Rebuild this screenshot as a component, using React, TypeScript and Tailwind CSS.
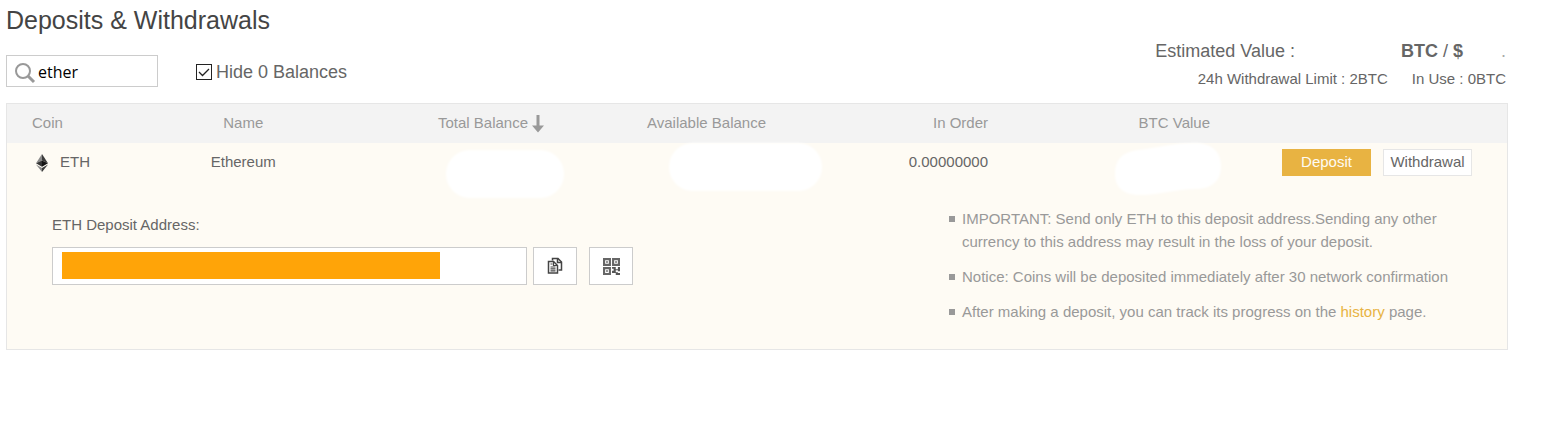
import { useState } from 'react';

const NOTES = [
  <>IMPORTANT: Send only ETH to this deposit address.Sending any other currency to this address may result in the loss of your deposit.</>,
  <>Notice: Coins will be deposited immediately after 30 network confirmation</>,
  <>After making a deposit, you can track its progress on the <a href="#history" className="text-[#e8b342]">history</a> page.</>,
];

function SearchIcon() {
  return (
    <svg width="22" height="22" viewBox="0 0 22 22" fill="none" stroke="#999" className="shrink-0" aria-hidden="true">
      <circle cx="8" cy="9" r="7" strokeWidth="2" />
      <path d="M13 14l6 6" strokeWidth="3" />
    </svg>
  );
}

function EthIcon() {
  return (
    <svg width="12" height="18" viewBox="0 0 12 18" aria-hidden="true">
      <path d="M6 0L0 9.2l6-2.6z" fill="#8a8a8a" />
      <path d="M6 0v6.600l6 2.600z" fill="#3c3c3b" />
      <path d="M0 9.200l6 3.500V6.600z" fill="#343434" />
      <path d="M12 9.200l-6 3.500V6.600z" fill="#141414" />
      <path d="M0 10.400L6 18v-4z" fill="#8a8a8a" />
      <path d="M12 10.400L6 18v-4z" fill="#3c3c3b" />
    </svg>
  );
}

function SortIcon() {
  return (
    <svg width="12" height="18" viewBox="0 0 12 18" fill="#999" aria-hidden="true">
      <path d="M4.500 0h3v10.500H12L6 17.500 0 10.500h4.500z" />
    </svg>
  );
}

function CopyIcon() {
  return (
    <svg width="16" height="18" viewBox="0 0 16 18" fill="none" stroke="#444" strokeWidth="1.500" aria-hidden="true">
      <path d="M5.500 3.500V1.500h5.500l3.500 3.500v8h-3" />
      <path d="M10.500 1.500v4h4" />
      <path d="M1.500 4.500h5l4 4v7.500h-9z" fill="#fff" />
      <path d="M6.500 4.500v4h4M3.500 7h2M3.500 10h5M3.500 11.900h5M3.500 13.800h5" strokeWidth="1.200" />
    </svg>
  );
}

function QrIcon() {
  return (
    <svg width="17" height="17" viewBox="0 0 16 16" aria-hidden="true">
      <g fill="none" stroke="#666" strokeWidth="2">
        <path d="M1 1h5.500v5.500H1zM9.500 1H15v5.500H9.500zM1 9.500h5.500V15H1z" />
      </g>
      <path d="M3 3h1.500v1.500H3zM11.500 3H13v1.500h-1.500zM3 11.500h1.500V13H3zM8.500 8.500h3.500v2h2v-2h2v4h-2v-1h-2v2h2v2.500H12v-2H8.500v-2H10v-2H8.500zM14 14h2v2h-2z" fill="#555" />
    </svg>
  );
}

export default function App() {
  const [search, setSearch] = useState('ether');
  const [hideZero, setHideZero] = useState(true);

  return (
    <div className="pl-[6px] pr-[37px] pt-1 font-['Liberation_Sans',sans-serif] text-[#666]">
      <h1 className="text-[25px] leading-8 text-[#444]">Deposits &amp; Withdrawals</h1>

      <div className="flex justify-between items-start">
        <div className="flex items-center pt-[19px]">
          <div className="flex items-center w-[152px] h-8 pl-2 pt-1 border border-[#ccc]">
            <SearchIcon />
            <input
              type="text"
              aria-label="Search coin"
              value={search}
              onChange={e => setSearch(e.target.value)}
              className="w-full min-w-0 pl-px pb-[2px] text-base text-black font-['Open_Sans',sans-serif] outline-none"
            />
          </div>
          <label className="flex items-center ml-[38px] pt-[2px] text-[18px]">
            <span className="relative flex w-4 h-4 mr-1">
              <input
                type="checkbox"
                checked={hideZero}
                onChange={e => setHideZero(e.target.checked)}
                className="appearance-none w-4 h-4 border border-[#222] bg-white"
              />
              {hideZero && (
                <svg viewBox="0 0 16 16" fill="none" stroke="#222" strokeWidth="1.300" className="absolute inset-0 pointer-events-none" aria-hidden="true">
                  <path d="M3 8l3.500 3.500L13 5" />
                </svg>
              )}
            </span>
            Hide 0 Balances
          </label>
        </div>

        <div className="pt-px pr-[2px]">
          <div className="flex justify-end text-[18px] leading-7">
            <span>Estimated Value :</span>
            <span className="ml-[106px]"><b>BTC</b> / <b>$</b></span>
            <span className="ml-[38px] text-[#aaa]">.</span>
          </div>
          <div className="flex justify-end gap-6 text-[15px] leading-7">
            <span>24h Withdrawal Limit : 2BTC</span>
            <span>In Use : 0BTC</span>
          </div>
        </div>
      </div>

      <div className="mt-[10px] border border-[#e6e6e6] bg-[#fefbf4] text-[15px]">
        <table className="w-full table-fixed">
          <colgroup>
            <col className="w-[10.5%]" />
            <col className="w-[10.5%]" />
            <col className="w-[14.8%]" />
            <col className="w-[14.8%]" />
            <col className="w-[14.8%]" />
            <col className="w-[14.8%]" />
            <col />
          </colgroup>
          <thead className="bg-[#f3f3f3] text-[#999]">
            <tr className="h-[39px]">
              <th className="pl-[25px] text-left font-normal">Coin</th>
              <th className="text-center font-normal">Name</th>
              <th className="font-normal">
                <button className="flex items-center gap-1 ml-auto">Total Balance <SortIcon /></button>
              </th>
              <th className="text-right font-normal">Available Balance</th>
              <th className="text-right font-normal">In Order</th>
              <th className="text-right font-normal">BTC Value</th>
              <th aria-label="Actions"></th>
            </tr>
          </thead>
          <tbody>
            <tr className="h-[39px]">
              <td className="pl-[29px]"><span className="flex items-center gap-3"><EthIcon />ETH</span></td>
              <td className="text-center">Ethereum</td>
              <td className="relative">
                <span className="absolute -right-5 top-[7px] w-[118px] h-12 rounded-[24px] bg-white blur-[1px]"></span>
              </td>
              <td className="relative">
                <span className="absolute -right-14 top-0 w-[153px] h-12 rounded-[24px] bg-white blur-[1px]"></span>
              </td>
              <td className="text-right">0.00000000</td>
              <td className="relative">
                <svg width="108" height="54" viewBox="0 0 108 54" className="absolute -right-3 -top-px blur-[1px]" aria-hidden="true">
                  <path d="M24 8C44 6 58 1 80 1c17 0 27 8 27 23 0 16-10 23-27 23-18 0-34 6-54 6C8 53 1 44 1 32 1 18 8 10 24 8z" fill="#fff" />
                </svg>
              </td>
              <td className="pr-[35px]">
                <div className="flex justify-end gap-3">
                  <button className="w-[89px] h-[27px] bg-[#e8b342] text-[#fefbf4]">Deposit</button>
                  <button className="w-[89px] h-[27px] bg-white border border-[#e6e6e6]">Withdrawal</button>
                </div>
              </td>
            </tr>
          </tbody>
        </table>

        <div className="flex justify-between pt-[25px] pb-[26px] pl-[45px] pr-12">
          <div className="pt-[8px]">
            <label htmlFor="address" className="block leading-5">ETH Deposit Address:</label>
            <div className="flex items-center mt-3">
              <div className="w-[475px] h-[38px] py-1 px-[9px] bg-white border border-[#ccc]">
                <input id="address" type="text" readOnly className="block w-[378px] h-[27px] bg-[#ffa408] outline-none" />
              </div>
              <button aria-label="Copy address" className="flex items-center justify-center w-11 h-[38px] ml-[6px] bg-white border border-[#ccc]"><CopyIcon /></button>
              <button aria-label="Show QR code" className="flex items-center justify-center w-11 h-[38px] ml-3 bg-white border border-[#ccc]"><QrIcon /></button>
            </div>
          </div>
          <ul className="w-[510px] space-y-3 leading-[23px] text-[#999]">
            {NOTES.map((note, i) => (
              <li key={i} className="flex gap-[7px]">
                <span className="w-[6px] h-[6px] mt-[9px] shrink-0 bg-[#999]"></span>
                <p>{note}</p>
              </li>
            ))}
          </ul>
        </div>
      </div>
    </div>
  );
}
